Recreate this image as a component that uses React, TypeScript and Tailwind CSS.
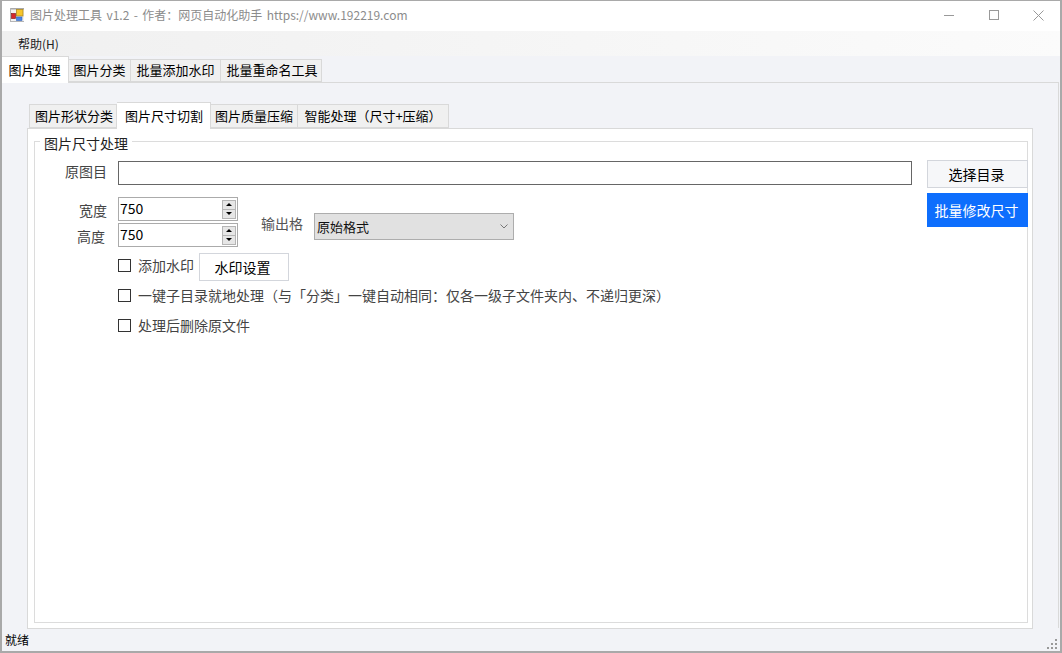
const font = { fontFamily: '"Noto Sans CJK SC", "Liberation Sans", sans-serif' };

const outerTabs = [
	{ label: "图片分类", width: "w-[62px]" },
	{ label: "批量添加水印", width: "w-[90px]" },
	{ label: "批量重命名工具", width: "w-[101px] pl-[2px]" },
];

const AppIcon = () => (
	<svg width="14" height="14" viewBox="0 0 14 14" className="shrink-0">
		<rect x="0" y="0" width="14" height="14" fill="#f2f2f2" />
		<rect x="0" y="0" width="14" height="1.5" fill="#a8a8a8" />
		<rect x="0" y="0" width="1" height="14" fill="#b5b5b5" />
		<rect x="0" y="13" width="14" height="1" fill="#b5b5b5" />
		<rect x="1.5" y="5.5" width="4" height="5" fill="#d8262c" stroke="#8a2020" strokeWidth="0.7" />
		<rect x="6.5" y="1.5" width="6.5" height="6.5" fill="#f6c52c" stroke="#b08a20" strokeWidth="0.8" />
		<rect x="6.5" y="9" width="5.5" height="3.5" fill="#4a86e8" stroke="#2f62b8" strokeWidth="0.6" />
	</svg>
);

const Spinner = ({ value }: { value: string }) => (
	<div className="w-[120px] h-[24px] shrink-0 bg-white border border-[#ababab] flex items-center pl-[1px] pr-[1px]">
		<span className="flex-1 pb-[3px] text-[14px] leading-none text-black">{value}</span>
		<div className="flex flex-col">
			<div className="w-[14px] h-[10px] bg-[#e6e6e6] border border-[#b5b5b5] flex items-center justify-center">
				<div className="w-0 h-0 border-x-[3px] border-x-transparent border-b-[3px] border-b-black" />
			</div>
			<div className="w-[14px] h-[10px] -mt-[1px] bg-[#e6e6e6] border border-[#b5b5b5] flex items-center justify-center">
				<div className="w-0 h-0 border-x-[3px] border-x-transparent border-t-[3px] border-t-black" />
			</div>
		</div>
	</div>
);

const Check = ({ label }: { label: string }) => (
	<div className="flex items-center">
		<div className="w-[13px] h-[13px] bg-white border border-[#333333] shrink-0" />
		<span className="ml-[7px] text-[14px] leading-[18px] text-[#444444] whitespace-nowrap">{label}</span>
	</div>
);

const App = () => {
	return (
		<div style={font} className="w-[1062px] h-[653px] overflow-hidden flex flex-col bg-[#f2f3f7] border-[#a9a9a9] border-t border-l-2 border-r-2 border-b-2 text-black">
			{/* title bar */}
			<div className="h-[30px] bg-white flex items-center pl-[8px] pb-[2px] shrink-0">
				<AppIcon />
				<span className="ml-[6px] text-[12px] text-[#8c8c8c] whitespace-nowrap [word-spacing:1.7px]">图片处理工具 v1.2 - 作者：网页自动化助手 https://www.192219.com</span>
				<div className="ml-auto -mr-[1px] flex items-center">
					<div className="w-[45px] flex justify-center">
						<div className="w-[10px] h-[1px] bg-[#999999]" />
					</div>
					<div className="w-[45px] flex justify-center">
						<div className="w-[10px] h-[10px] border border-[#999999]" />
					</div>
					<div className="w-[45px] flex justify-center">
						<svg width="11" height="11" viewBox="0 0 11 11">
							<path d="M0.5 0.5 L10.5 10.5 M10.5 0.5 L0.5 10.5" stroke="#999999" strokeWidth="1" />
						</svg>
					</div>
				</div>
			</div>
			{/* menu */}
			<div className="h-[25px] bg-gradient-to-r from-[#f0f0f0] to-[#fbfbfb] flex items-center pl-[16px] shrink-0">
				<span className="text-[12px] text-[#222222]">帮助(H)</span>
			</div>
			{/* outer tabs */}
			<div className="h-[26px] flex items-end shrink-0 relative z-10">
				<div className="w-[67px] h-[27px] pr-[1px] bg-white border border-b-0 border-l-0 border-[#d9d9d9] flex items-center justify-center text-[13px] -mb-[1px]">图片处理</div>
				{outerTabs.map((t) => (
					<div key={t.label} className={t.width + " h-[23px] pb-[1px] bg-[#f0f0f0] border border-l-0 border-[#d9d9d9] flex items-center justify-center text-[13px]"}>
						{t.label}
					</div>
				))}
			</div>
			{/* outer tab page */}
			<div className="flex-1 min-h-0 ml-[3px] mr-[1px] flex flex-col border-t border-r border-[#d9d9d9] pt-[19px] pl-[22px] pr-[25px]">
				<div className="h-[26px] flex items-end shrink-0 relative z-10 pl-[2px]">
					<div className="w-[88px] h-[24px] pl-[2px] bg-[#f0f0f0] border border-[#d9d9d9] flex items-center justify-center text-[13px]">图片形状分类</div>
					<div className="w-[94px] h-[27px] pl-[1px] bg-white border border-b-0 border-l-0 border-[#d9d9d9] flex items-center justify-center text-[13px] -mb-[1px]">图片尺寸切割</div>
					<div className="w-[87px] h-[24px] bg-[#f0f0f0] border border-l-0 border-[#d9d9d9] flex items-center justify-center text-[13px]">图片质量压缩</div>
					<div className="w-[151px] h-[24px] bg-[#f0f0f0] border border-l-0 border-[#d9d9d9] flex items-center justify-center text-[13px]">智能处理（尺寸+压缩）</div>
				</div>
				{/* inner tab page */}
				<div className="h-[501px] bg-white border border-[#d9d9d9] pt-[12px] pl-[6px] pr-[4px] pb-[5px] shrink-0">
					<div className="h-full border border-[#dcdcdc] relative pl-[83px] pt-[19px]">
						<span className="absolute left-[5px] -top-[8px] bg-white px-[4px] text-[14px] leading-[18px] text-[#222222]">图片尺寸处理</span>
						<div className="flex items-start">
							<span className="w-[72px] -ml-[72px] shrink-0 text-[14px] leading-[20px] text-[#444444] text-right pr-[11px]">原图目</span>
							<div className="w-[794px] h-[24px] shrink-0 bg-white border border-[#666666]" />
							<div className="ml-[15px] -mt-[1px] w-[101px] h-[28px] pr-[2px] shrink-0 bg-[#f6f7f9] border border-[#d3d6dc] flex items-center justify-center text-[14px]">选择目录</div>
						</div>
						<div className="flex items-start">
							<div className="flex flex-col gap-[2px] mt-[9px] shrink-0">
								<div className="flex items-center">
									<span className="w-[72px] -ml-[72px] shrink-0 pt-[2px] text-[14px] leading-[18px] text-[#444444] text-right pr-[11px]">宽度</span>
									<Spinner value="750" />
								</div>
								<div className="flex items-center">
									<span className="w-[72px] -ml-[72px] shrink-0 pt-[2px] text-[14px] leading-[18px] text-[#444444] text-right pr-[13px]">高度</span>
									<Spinner value="750" />
								</div>
							</div>
							<span className="ml-[23px] mt-[26px] shrink-0 whitespace-nowrap text-[14px] leading-[18px] text-[#555555]">输出格</span>
							<div className="ml-[11px] mt-[25px] w-[200px] h-[27px] shrink-0 bg-[#e1e1e1] border border-[#adadad] flex items-center pl-[2px] pr-[5px]">
								<span className="text-[13px] text-[#111111] flex-1">原始格式</span>
								<svg width="8" height="5" viewBox="0 0 8 5">
									<path d="M0.5 0.5 L4 4 L7.5 0.5" fill="none" stroke="#777777" strokeWidth="1" />
								</svg>
							</div>
							<div className="ml-[413px] mt-[5px] w-[101px] h-[34px] pr-[2px] shrink-0 bg-[#0d6efd] flex items-center justify-center text-[14px] text-white">批量修改尺寸</div>
						</div>
						<div className="flex items-start mt-[6px]">
							<div className="mt-[3px]">
								<Check label="添加水印" />
							</div>
							<div className="ml-[5px] w-[90px] h-[28px] pr-[3px] bg-white border border-[#d3d6dc] flex items-center justify-center text-[14px]">水印设置</div>
						</div>
						<div className="mt-[5px]">
							<Check label="一键子目录就地处理（与「分类」一键自动相同：仅各一级子文件夹内、不递归更深）" />
						</div>
						<div className="mt-[12px]">
							<Check label="处理后删除原文件" />
						</div>
					</div>
				</div>
			</div>
			{/* status bar */}
			<div className="h-[23px] flex items-center pl-[3px] pr-[3px] shrink-0">
				<span className="text-[12px] flex-1">就绪</span>
				<svg width="10" height="10" viewBox="0 0 10 10" fill="#999999" className="self-end mb-[2px]">
					<rect x="8" y="0" width="2" height="2" />
					<rect x="4" y="4" width="2" height="2" />
					<rect x="8" y="4" width="2" height="2" />
					<rect x="0" y="8" width="2" height="2" />
					<rect x="4" y="8" width="2" height="2" />
					<rect x="8" y="8" width="2" height="2" />
				</svg>
			</div>
		</div>
	);
};

export default App;
